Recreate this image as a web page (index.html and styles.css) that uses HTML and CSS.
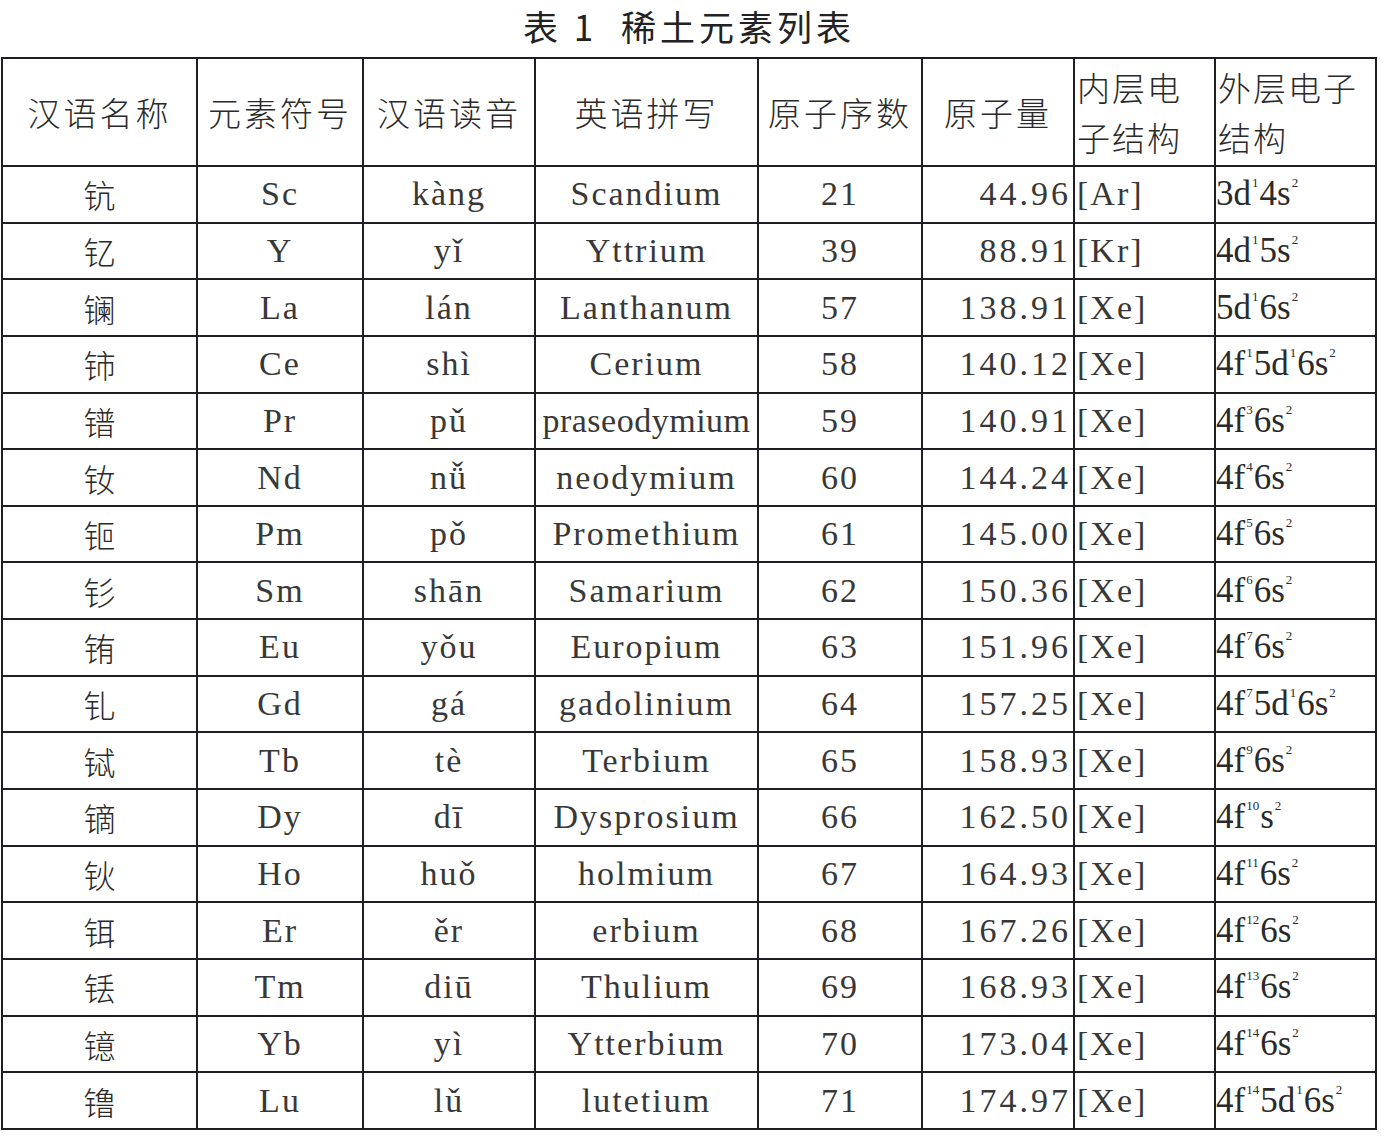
FILE: index.html
```html
<!DOCTYPE html>
<html lang="zh">
<head>
<meta charset="utf-8">
<title>表1 稀土元素列表</title>
<link rel="stylesheet" href="styles.css">
</head>
<body>
<div class="page">
  <h1 class="title">表 1&nbsp;&nbsp;稀土元素列表</h1>
  <table class="ree">
    <colgroup>
      <col class="c1"><col class="c2"><col class="c3"><col class="c4">
      <col class="c5"><col class="c6"><col class="c7"><col class="c8">
    </colgroup>
    <thead>
      <tr>
        <th>汉语名称</th>
        <th>元素符号</th>
        <th>汉语读音</th>
        <th>英语拼写</th>
        <th>原子序数</th>
        <th>原子量</th>
        <th class="left">内层电<br>子结构</th>
        <th class="left">外层电子<br>结构</th>
      </tr>
    </thead>
    <tbody>
      <tr><td class="zh">钪</td><td class="lat">Sc</td><td class="lat">kàng</td><td class="lat">Scandium</td><td class="lat">21</td><td class="lat num">44.96</td><td class="lat left">[Ar]</td><td class="cfg">3d<sup>1</sup>4s<sup>2</sup></td></tr>
      <tr><td class="zh">钇</td><td class="lat">Y</td><td class="lat">yǐ</td><td class="lat">Yttrium</td><td class="lat">39</td><td class="lat num">88.91</td><td class="lat left">[Kr]</td><td class="cfg">4d<sup>1</sup>5s<sup>2</sup></td></tr>
      <tr><td class="zh">镧</td><td class="lat">La</td><td class="lat">lán</td><td class="lat">Lanthanum</td><td class="lat">57</td><td class="lat num">138.91</td><td class="lat left">[Xe]</td><td class="cfg">5d<sup>1</sup>6s<sup>2</sup></td></tr>
      <tr><td class="zh">铈</td><td class="lat">Ce</td><td class="lat">shì</td><td class="lat">Cerium</td><td class="lat">58</td><td class="lat num">140.12</td><td class="lat left">[Xe]</td><td class="cfg">4f<sup>1</sup>5d<sup>1</sup>6s<sup>2</sup></td></tr>
      <tr><td class="zh">镨</td><td class="lat">Pr</td><td class="lat">pǔ</td><td class="lat tight">praseodymium</td><td class="lat">59</td><td class="lat num">140.91</td><td class="lat left">[Xe]</td><td class="cfg">4f<sup>3</sup>6s<sup>2</sup></td></tr>
      <tr><td class="zh">钕</td><td class="lat">Nd</td><td class="lat">nǚ</td><td class="lat">neodymium</td><td class="lat">60</td><td class="lat num">144.24</td><td class="lat left">[Xe]</td><td class="cfg">4f<sup>4</sup>6s<sup>2</sup></td></tr>
      <tr><td class="zh">钷</td><td class="lat">Pm</td><td class="lat">pǒ</td><td class="lat">Promethium</td><td class="lat">61</td><td class="lat num">145.00</td><td class="lat left">[Xe]</td><td class="cfg">4f<sup>5</sup>6s<sup>2</sup></td></tr>
      <tr><td class="zh">钐</td><td class="lat">Sm</td><td class="lat">shān</td><td class="lat">Samarium</td><td class="lat">62</td><td class="lat num">150.36</td><td class="lat left">[Xe]</td><td class="cfg">4f<sup>6</sup>6s<sup>2</sup></td></tr>
      <tr><td class="zh">铕</td><td class="lat">Eu</td><td class="lat">yǒu</td><td class="lat">Europium</td><td class="lat">63</td><td class="lat num">151.96</td><td class="lat left">[Xe]</td><td class="cfg">4f<sup>7</sup>6s<sup>2</sup></td></tr>
      <tr><td class="zh">钆</td><td class="lat">Gd</td><td class="lat">gá</td><td class="lat">gadolinium</td><td class="lat">64</td><td class="lat num">157.25</td><td class="lat left">[Xe]</td><td class="cfg">4f<sup>7</sup>5d<sup>1</sup>6s<sup>2</sup></td></tr>
      <tr><td class="zh">铽</td><td class="lat">Tb</td><td class="lat">tè</td><td class="lat">Terbium</td><td class="lat">65</td><td class="lat num">158.93</td><td class="lat left">[Xe]</td><td class="cfg">4f<sup>9</sup>6s<sup>2</sup></td></tr>
      <tr><td class="zh">镝</td><td class="lat">Dy</td><td class="lat">dī</td><td class="lat">Dysprosium</td><td class="lat">66</td><td class="lat num">162.50</td><td class="lat left">[Xe]</td><td class="cfg">4f<sup>10</sup>s<sup>2</sup></td></tr>
      <tr><td class="zh">钬</td><td class="lat">Ho</td><td class="lat">huǒ</td><td class="lat">holmium</td><td class="lat">67</td><td class="lat num">164.93</td><td class="lat left">[Xe]</td><td class="cfg">4f<sup>11</sup>6s<sup>2</sup></td></tr>
      <tr><td class="zh">铒</td><td class="lat">Er</td><td class="lat">ěr</td><td class="lat">erbium</td><td class="lat">68</td><td class="lat num">167.26</td><td class="lat left">[Xe]</td><td class="cfg">4f<sup>12</sup>6s<sup>2</sup></td></tr>
      <tr><td class="zh">铥</td><td class="lat">Tm</td><td class="lat">diū</td><td class="lat">Thulium</td><td class="lat">69</td><td class="lat num">168.93</td><td class="lat left">[Xe]</td><td class="cfg">4f<sup>13</sup>6s<sup>2</sup></td></tr>
      <tr><td class="zh">镱</td><td class="lat">Yb</td><td class="lat">yì</td><td class="lat">Ytterbium</td><td class="lat">70</td><td class="lat num">173.04</td><td class="lat left">[Xe]</td><td class="cfg">4f<sup>14</sup>6s<sup>2</sup></td></tr>
      <tr><td class="zh">镥</td><td class="lat">Lu</td><td class="lat">lǔ</td><td class="lat">lutetium</td><td class="lat">71</td><td class="lat num">174.97</td><td class="lat left">[Xe]</td><td class="cfg">4f<sup>14</sup>5d<sup>1</sup>6s<sup>2</sup></td></tr>
    </tbody>
  </table>
</div>
</body>
</html>
```

FILE: styles.css
```css
html, body {
  margin: 0;
  padding: 0;
  background: #ffffff;
}

.page {
  width: 1386px;
  padding: 0 0 0 1px;
  box-sizing: border-box;
  color: #222;
}

.title {
  margin: 0;
  height: 57px;
  width: 1376px;
  text-align: center;
  font-family: "Noto Sans CJK SC", sans-serif;
  font-weight: 400;
  font-size: 35px;
  line-height: 51px;
  letter-spacing: 4px;
  color: #222;
}

.ree {
  border-collapse: collapse;
  table-layout: fixed;
  width: 1376px;
}

.c1 { width: 195px; }
.c2 { width: 166px; }
.c3 { width: 172px; }
.c4 { width: 223px; }
.c5 { width: 164px; }
.c6 { width: 152px; }
.c7 { width: 141px; }
.c8 { width: 161px; }

.ree th,
.ree td {
  border: 2px solid #1e1e24;
  padding: 0;
  overflow: visible;
  white-space: nowrap;
}

.ree thead tr { height: 108px; }
.ree tbody tr { height: 56.65px; }

.ree th {
  font-family: "Noto Sans CJK SC", sans-serif;
  font-weight: 300;
  font-size: 33px;
  line-height: 50px;
  letter-spacing: 3px;
  text-align: center;
  color: #2a2a2a;
}

.ree th.left {
  text-align: left;
  padding-left: 2px;
  letter-spacing: 2px;
}

.zh {
  font-family: "Noto Sans CJK SC", sans-serif;
  font-weight: 300;
  font-size: 32px;
  text-align: center;
  color: #2a2a2a;
}

.lat {
  font-family: "Liberation Serif", "Noto Sans CJK SC", serif;
  font-size: 34px;
  letter-spacing: 2px;
  text-align: center;
  color: #383838;
}

.lat.tight {
  letter-spacing: 0.5px;
}

.lat.num {
  text-align: right;
  padding-right: 2px;
  letter-spacing: 3px;
}

.lat.left {
  text-align: left;
  padding-left: 2px;
}

.cfg {
  font-family: "Liberation Serif", serif;
  font-size: 35px;
  text-align: left;
  padding-left: 1px;
  color: #2a2a2a;
}

.cfg sup {
  font-size: 13px;
  vertical-align: 18px;
  line-height: 0;
  margin: 0 1px;
}
```
